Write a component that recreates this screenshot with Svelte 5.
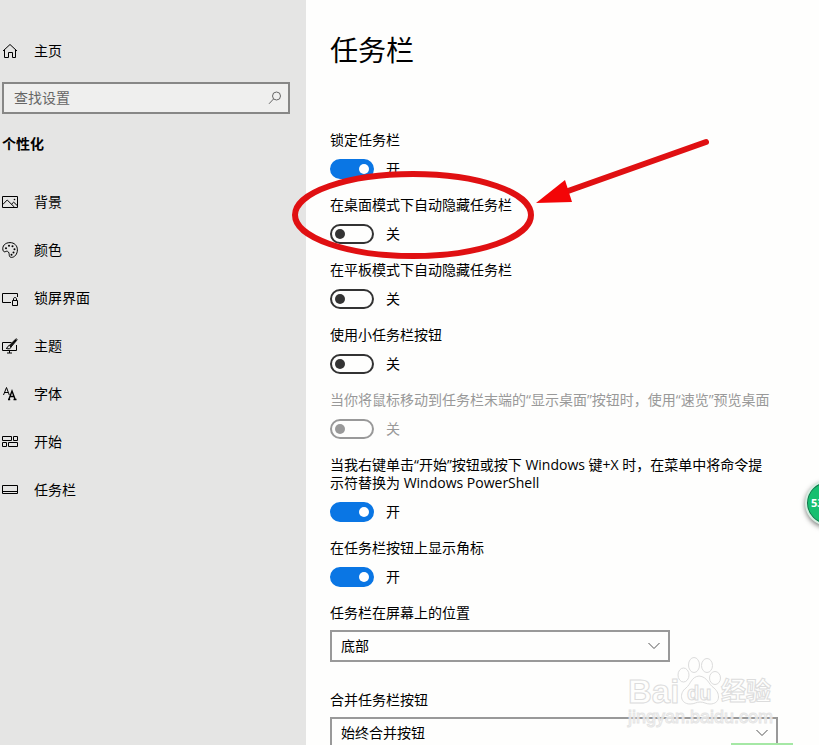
<script lang="ts">
    type Setting = {
        id: string;
        label: string;
        on: boolean;
        disabled?: boolean;
    };

    const navItems = [
        { icon: 'background', label: '背景' },
        { icon: 'colors', label: '颜色' },
        { icon: 'lock', label: '锁屏界面' },
        { icon: 'themes', label: '主题' },
        { icon: 'fonts', label: '字体' },
        { icon: 'start', label: '开始' },
        { icon: 'taskbar', label: '任务栏' }
    ];

    let settings: Setting[] = $state([
        { id: 'lock-taskbar', label: '锁定任务栏', on: true },
        { id: 'hide-desktop', label: '在桌面模式下自动隐藏任务栏', on: false },
        { id: 'hide-tablet', label: '在平板模式下自动隐藏任务栏', on: false },
        { id: 'small-buttons', label: '使用小任务栏按钮', on: false },
        { id: 'peek', label: '当你将鼠标移动到任务栏末端的“显示桌面”按钮时，使用“速览”预览桌面', on: false, disabled: true },
        { id: 'powershell', label: '当我右键单击“开始”按钮或按下 Windows 键+X 时，在菜单中将命令提示符替换为 Windows PowerShell', on: true },
        { id: 'badges', label: '在任务栏按钮上显示角标', on: true }
    ]);

    let query = $state('');
    let position = $state('底部');
    let combine = $state('始终合并按钮');
</script>

{#snippet icon(name: string)}
    <svg class="icon" viewBox="0 0 16 16" width="16" height="16" aria-hidden="true">
        {#if name === 'home'}
            <path d="M1 8 8 1.5 15 8M2.5 6.7V14.500H6.500V9.500H10.500V14.500H13.500V6.700" />
        {:else if name === 'background'}
            <path d="M.5 2.500H15.500V13.500H.5ZM.8 10.500 5.200 6 12.500 13.200M9.500 10.200 11.700 8.200 15.200 11.500" />
            <circle cx="12.500" cy="5.500" r=".8" class="dot" />
        {:else if name === 'colors'}
            <path d="M1 8.300C-.2 4 3.200.6 8 .6c4.300 0 7.400 3 7.400 7.200 0 4.500-3 7.600-5.800 7.600-2.900 0-2.100-2.700-2.600-4.300C6.500 9.400 5 8.800 3.800 9.500 2.600 10.200 1.500 9.800 1 8.300Z" />
            <circle cx="4" cy="6.200" r="1" class="dot" />
            <circle cx="7" cy="3.800" r="1" class="dot" />
            <circle cx="10.500" cy="4.200" r="1" class="dot" />
            <circle cx="12.500" cy="7.200" r="1" class="dot" />
            <circle cx="11.500" cy="10.500" r="1" class="dot" />
            <circle cx="9.500" cy="12.800" r="1" class="dot" />
        {:else if name === 'lock'}
            <path d="M9 12.500H.5V3.500H15.500V7M10.500 10.500H15.500V15.500H10.500ZM11.500 10.500V9C11.500 7 14.500 7 14.500 9V10.500" />
        {:else if name === 'themes'}
            <path d="M9.500 4.500H.5V12.500H14.500V7M7.500 12.500V15M5 15H10M7.300 7.500 13.500 1.200C14.800.3 15.500 1.400 14.700 2.400L9 9M7.300 7.500C5.500 7.500 6.200 9.800 4.200 10.400 6.500 11.300 9 10.800 9 9Z" />
            <path class="thick" d="M8.300 8.300 14 2" />
        {:else if name === 'fonts'}
            <path d="M1.500 9 4.500 1.500 7.300 9M2.500 6.500H6" />
            <path class="thick" d="M7 13 10 5 13 13M8.300 10.500H12M6 13.500H8.200M11.500 13.500H14.500" />
        {:else if name === 'start'}
            <path d="M.5 2.500H9.500V6.500H.5ZM11.500 2.500H15.500V6.500H11.500ZM.5 8.500H4.500V12.500H.5ZM6.500 8.500H15.500V12.500H6.500Z" />
        {:else if name === 'taskbar'}
            <path d="M.5 3.500H15.500V11.500H.5ZM.5 9.500H15.500" />
        {/if}
    </svg>
{/snippet}

<div class="settings">
    <aside class="sidebar">
        <a class="nav-link home" href="#home">
            {@render icon('home')}
            <span>主页</span>
        </a>

        <div class="search">
            <input type="text" aria-label="查找设置" placeholder="查找设置" bind:value={query} />
            <svg viewBox="0 0 14 14" width="14" height="14" aria-hidden="true">
                <circle cx="8.500" cy="5" r="4" />
                <path d="M5.500 8 1 12.800" />
            </svg>
        </div>

        <h2>个性化</h2>

        <nav>
            {#each navItems as item}
                <a class="nav-link" href="#{item.icon}">
                    {@render icon(item.icon)}
                    <span>{item.label}</span>
                </a>
            {/each}
        </nav>
    </aside>

    <main class="content">
        <h1>任务栏</h1>

        {#each settings as setting}
            <div class="setting" class:disabled={setting.disabled}>
                <label for={setting.id}>{setting.label}</label>
                <div class="toggle-row">
                    <input
                        id={setting.id}
                        class="toggle"
                        type="checkbox"
                        role="switch"
                        disabled={setting.disabled}
                        bind:checked={setting.on}
                    />
                    <span>{setting.on ? '开' : '关'}</span>
                </div>
            </div>
        {/each}

        <div class="field">
            <label for="position">任务栏在屏幕上的位置</label>
            <div class="select-box">
                <select id="position" bind:value={position}>
                    <option>底部</option>
                    <option>靠左</option>
                    <option>靠右</option>
                    <option>顶部</option>
                </select>
                <svg viewBox="0 0 12 8" width="12" height="8" aria-hidden="true"><path d="M.5 1 6 6.500 11.500 1" /></svg>
            </div>
        </div>

        <div class="field">
            <label for="combine">合并任务栏按钮</label>
            <div class="select-box wide">
                <select id="combine" bind:value={combine}>
                    <option>始终合并按钮</option>
                    <option>任务栏已满时</option>
                    <option>从不</option>
                </select>
                <svg viewBox="0 0 12 8" width="12" height="8" aria-hidden="true"><path d="M.5 1 6 6.500 11.500 1" /></svg>
            </div>
        </div>
    </main>

    <!-- hand-drawn marks over the second setting -->
    <svg class="marks" viewBox="0 0 420 100" width="420" height="100" aria-hidden="true">
        <ellipse cx="123" cy="50" rx="118" ry="41" />
        <path d="M278 26 416 -23" />
        <path class="head" d="M246 38 275 15 282 37Z" />
    </svg>

    <svg class="watermark" viewBox="0 0 152 74" width="152" height="74" aria-hidden="true">
        <text x="2" y="49" class="brand" font-size="33">Bai</text>
        <ellipse cx="57.500" cy="21" rx="5.500" ry="7" />
        <ellipse cx="68" cy="11" rx="5.500" ry="7.500" />
        <ellipse cx="81" cy="11.500" rx="5.500" ry="7" />
        <ellipse cx="89" cy="24" rx="5.500" ry="6.500" />
        <path d="M73 22C65 23 65 30 60 34 53 39 54 50 64 50 69 50 70 48 74 48 78 48 80 50 84 50 94 50 95 40 88 34 82 30 82 23 73 22Z" />
        <text x="61" y="46" class="brand" font-size="20">du</text>
        <text x="95" y="46" class="brand" font-size="25">经验</text>
        <text x="2" y="69" class="site" font-size="18">jingyan.baidu.com</text>
    </svg>

    <div class="ball">53</div>
    <div class="glow"></div>
</div>

<style>
    :global(body) {
        background: #fefefd;
    }

    .settings {
        position: relative;
        display: flex;
        height: 100vh;
        overflow: hidden;
        font-family: "Open Sans", "Noto Sans CJK SC", sans-serif;
        font-size: 14px;
        line-height: 18px;
        color: #000;
    }

    .sidebar {
        flex: 0 0 306px;
        box-sizing: border-box;
        padding: 27px 16px 0 2px;
        background: #e5e5e4;
    }

    .nav-link {
        display: flex;
        align-items: center;
        gap: 16px;
        height: 48px;
        color: inherit;
        text-decoration: none;
    }

    .icon {
        flex: none;
        fill: none;
        stroke: #000;
        stroke-width: 1;
    }

    .icon .dot {
        fill: #000;
        stroke: none;
    }

    .icon .thick {
        stroke-width: 1.4;
    }

    .search {
        display: flex;
        align-items: center;
        box-sizing: border-box;
        height: 32px;
        margin-top: 7px;
        padding: 0 6px 0 10px;
        border: 2px solid #878786;
        background: #efefee;
    }

    .search input {
        flex: 1;
        min-width: 0;
        padding: 0;
        border: 0;
        outline: 0;
        background: none;
        font: inherit;
        color: #000;
    }

    .search input::placeholder {
        color: #666;
        opacity: 1;
    }

    .search svg {
        fill: none;
        stroke: #666;
    }

    h2 {
        margin: 21px 0 25px;
        font-size: 14px;
        line-height: 18px;
        font-weight: 700;
    }

    .content {
        flex: 1;
        min-width: 0;
        padding: 30px 41px 0 24px;
    }

    h1 {
        margin: 0 0 61px;
        font-size: 28px;
        line-height: 40px;
        font-weight: 400;
    }

    .setting {
        margin-bottom: 17px;
    }

    .setting label,
    .field label {
        display: block;
        max-width: 442px;
    }

    .toggle-row {
        display: flex;
        align-items: center;
        gap: 12px;
        height: 20px;
        margin-top: 10px;
    }

    .toggle {
        appearance: none;
        display: flex;
        align-items: center;
        box-sizing: border-box;
        width: 44px;
        height: 20px;
        margin: 0;
        padding: 0 3px;
        border: 2px solid #333;
        border-radius: 10px;
    }

    .toggle::before {
        content: '';
        width: 10px;
        height: 10px;
        border-radius: 50%;
        background: #333;
    }

    .toggle:checked {
        justify-content: flex-end;
        border-color: #0a76e4;
        background: #0a76e4;
    }

    .toggle:checked::before {
        background: #fff;
    }

    .disabled {
        color: #999;
    }

    .disabled .toggle {
        border-color: #999;
    }

    .disabled .toggle::before {
        background: #999;
    }

    .field {
        margin-bottom: 29px;
    }

    .select-box {
        display: grid;
        align-items: center;
        max-width: 340px;
        margin-top: 8px;
    }

    .select-box.wide {
        max-width: 448px;
    }

    .select-box select,
    .select-box svg {
        grid-area: 1 / 1;
    }

    .select-box select {
        appearance: none;
        width: 100%;
        height: 32px;
        padding: 0 32px 0 9px;
        border: 2px solid #999;
        border-radius: 0;
        background: #fefefd;
        font: inherit;
        color: #000;
    }

    .select-box svg {
        justify-self: end;
        margin-right: 10px;
        fill: none;
        stroke: #555;
        pointer-events: none;
    }

    .marks {
        position: absolute;
        left: 290px;
        top: 165px;
        overflow: visible;
        fill: none;
        stroke: #e01012;
        stroke-width: 6;
        stroke-linecap: round;
        pointer-events: none;
    }

    .marks .head {
        fill: #f30507;
        stroke: none;
    }

    .watermark {
        position: absolute;
        right: 41px;
        bottom: 17px;
        overflow: visible;
        fill: #fefefd;
        fill-opacity: 0.6;
        stroke: #dcdcdc;
        stroke-width: 1;
        pointer-events: none;
    }

    .brand {
        font-family: "Liberation Sans", "Noto Sans CJK SC", sans-serif;
        font-weight: 700;
    }

    .site {
        font-family: "Liberation Sans", sans-serif;
        stroke: #e4e4e4;
    }

    .ball {
        position: absolute;
        right: -32px;
        top: 480px;
        box-sizing: border-box;
        width: 46px;
        height: 46px;
        padding-left: 4px;
        border: 2px solid #d5ece0;
        border-radius: 50%;
        background: #16bf70;
        box-shadow: inset 0 0 0 1px #15704a, 0 2px 5px rgba(0, 0, 0, 0.5);
        font-size: 11px;
        line-height: 42px;
        font-weight: 700;
        color: #fff;
    }

    .glow {
        position: absolute;
        right: 26px;
        bottom: 0;
        width: 62px;
        height: 2px;
        background: #a5e8a5;
    }
</style>
